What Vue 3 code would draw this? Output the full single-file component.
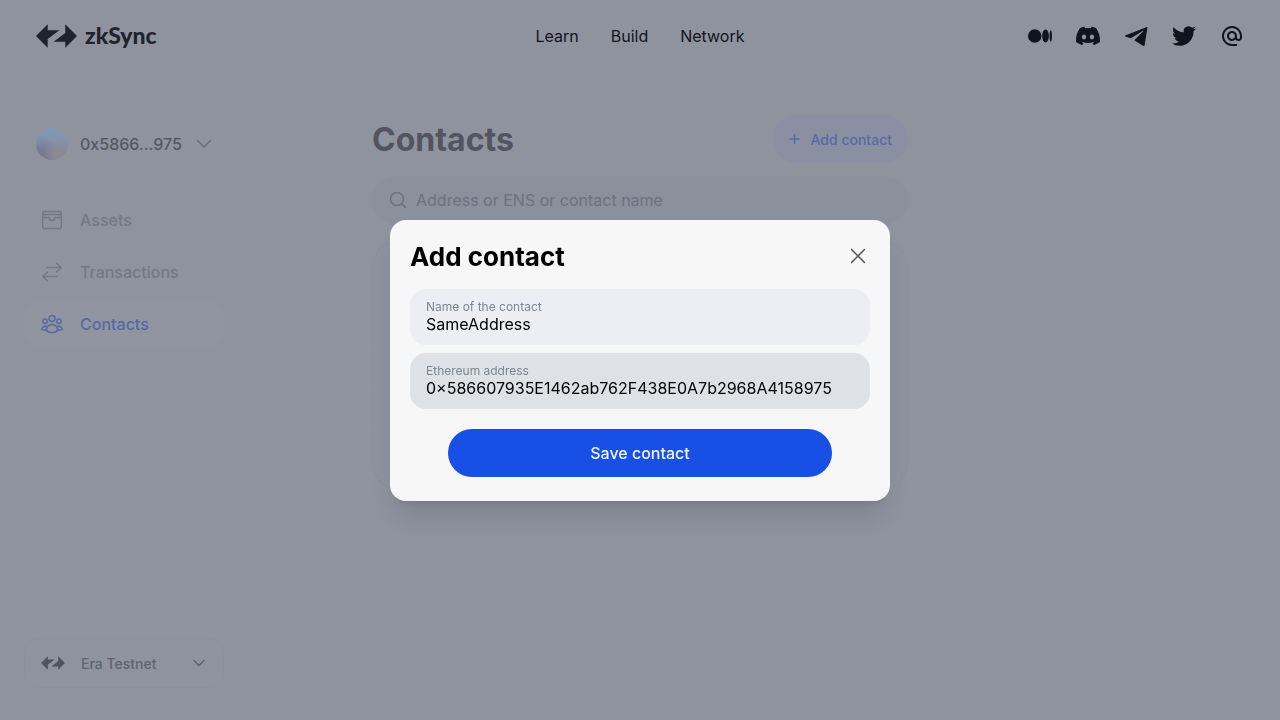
<script setup>
import { ref } from 'vue'

const topLinks = ['Learn', 'Build', 'Network']
const socials = [
  { name: 'Medium', d: 'M13.54 12a6.8 6.8 0 01-6.77 6.82A6.8 6.8 0 010 12a6.8 6.8 0 016.77-6.82A6.8 6.8 0 0113.54 12zM20.96 12c0 3.54-1.51 6.42-3.38 6.42-1.87 0-3.39-2.88-3.39-6.42s1.52-6.42 3.39-6.42 3.38 2.88 3.38 6.42M24 12c0 3.17-.53 5.75-1.19 5.75-.66 0-1.19-2.58-1.19-5.75s.53-5.75 1.19-5.75C23.47 6.25 24 8.83 24 12z' },
  { name: 'Discord', d: 'M20.317 4.3698a19.7913 19.7913 0 00-4.8851-1.5152.0741.0741 0 00-.0785.0371c-.211.3753-.4447.8648-.6083 1.2495-1.8447-.2762-3.68-.2762-5.4868 0-.1636-.3933-.4058-.8742-.6177-1.2495a.077.077 0 00-.0785-.037 19.7363 19.7363 0 00-4.8852 1.515.0699.0699 0 00-.0321.0277C.5334 9.0458-.319 13.5799.0992 18.0578a.0824.0824 0 00.0312.0561c2.0528 1.5076 4.0413 2.4228 5.9929 3.0294a.0777.0777 0 00.0842-.0276c.4616-.6304.8731-1.2952 1.226-1.9942a.076.076 0 00-.0416-.1057c-.6528-.2476-1.2743-.5495-1.8722-.8923a.077.077 0 01-.0076-.1277c.1258-.0943.2517-.1923.3718-.2914a.0743.0743 0 01.0776-.0105c3.9278 1.7933 8.18 1.7933 12.0614 0a.0739.0739 0 01.0785.0095c.1202.099.246.1981.3728.2924a.077.077 0 01-.0066.1276 12.2986 12.2986 0 01-1.873.8914.0766.0766 0 00-.0407.1067c.3604.698.7719 1.3628 1.225 1.9932a.076.076 0 00.0842.0286c1.961-.6067 3.9495-1.5219 6.0023-3.0294a.077.077 0 00.0313-.0552c.5004-5.177-.8382-9.6739-3.5485-13.6604a.061.061 0 00-.0312-.0286zM8.02 15.3312c-1.1825 0-2.1569-1.0857-2.1569-2.419 0-1.3332.9555-2.4189 2.157-2.4189 1.2108 0 2.1757 1.0952 2.1568 2.419 0 1.3332-.9555 2.4189-2.1569 2.4189zm7.9748 0c-1.1825 0-2.1569-1.0857-2.1569-2.419 0-1.3332.9554-2.4189 2.1569-2.4189 1.2108 0 2.1757 1.0952 2.1568 2.419 0 1.3332-.946 2.4189-2.1568 2.4189Z' },
  { name: 'Telegram', d: 'M22.9 3 1.8 11.3c-1 .4-1 1.2-.1 1.5l5.2 1.4L18.6 7c.6-.4 1.1-.1.7.3l-9.1 8.9 0 0 8.8 5.6c.8.5 1.5.2 1.7-.8L23.4 4c.1-.8-.1-1.200-.5-1z' },
  { name: 'Twitter', d: 'M23.953 4.57a10 10 0 01-2.825.775 4.958 4.958 0 002.163-2.723c-.951.555-2.005.959-3.127 1.184a4.92 4.92 0 00-8.384 4.482C7.69 8.095 4.067 6.13 1.64 3.162a4.822 4.822 0 00-.666 2.475c0 1.71.87 3.213 2.188 4.096a4.904 4.904 0 01-2.228-.616v.06a4.923 4.923 0 003.946 4.827 4.996 4.996 0 01-2.212.085 4.936 4.936 0 004.604 3.417 9.867 9.867 0 01-6.102 2.105c-.39 0-.779-.023-1.17-.067a13.995 13.995 0 007.557 2.209c9.053 0 13.998-7.496 13.998-13.985 0-.21 0-.42-.015-.63A9.935 9.935 0 0024 4.59z' },
  { name: 'Email', d: 'M12 1.950C6.480 1.950 2 6.430 2 12s4.480 10 10 10h5v-2h-5c-4.340 0-8-3.660-8-8s3.660-8 8-8 8 3.660 8 8v1.430c0 .79-.71 1.570-1.500 1.570s-1.500-.780-1.500-1.570V12c0-2.760-2.240-5-5-5s-5 2.240-5 5 2.240 5 5 5c1.380 0 2.640-.560 3.540-1.470.650.890 1.770 1.470 2.960 1.470 1.970 0 3.500-1.600 3.500-3.570V12c0-5.520-4.480-10.050-10-10.050zM12 15c-1.660 0-3-1.340-3-3s1.340-3 3-3 3 1.340 3 3-1.340 3-3 3z' },
]
const menu = [
  { label: 'Assets', icon: 'assets' },
  { label: 'Transactions', icon: 'swap' },
  { label: 'Contacts', icon: 'people', active: true },
]
const search = ref('')
const name = ref('SameAddress')
const address = ref('0×586607935E1462ab762F438E0A7b2968A4158975')
</script>

<template>
  <div class="page">
    <header class="header">
      <a href="#" class="brand" aria-label="zkSync">
        <svg width="41" height="24" viewBox="0 0 42 24" aria-hidden="true">
          <path d="M0 12 12 0v6h12L12 15v9zM42 12 30 0v9L18 18h12v6z" />
        </svg>
        <span>zkSync</span>
      </a>
      <nav class="top-nav">
        <a v-for="l in topLinks" :key="l" href="#">{{ l }}</a>
      </nav>
      <div class="socials">
        <a v-for="s in socials" :key="s.name" href="#" :aria-label="s.name">
          <svg width="24" height="24" viewBox="0 0 24 24"><path :d="s.d" /></svg>
        </a>
      </div>
    </header>

    <div class="body">
      <aside class="sidebar">
        <button class="account" type="button">
          <span class="avatar"></span>
          <span class="account-name">0x5866...975</span>
          <svg width="16" height="16" viewBox="0 0 16 16" class="line"><path d="M1.500 4.500 8 11l6.500-6.500" /></svg>
        </button>
        <nav class="menu">
          <a v-for="m in menu" :key="m.label" href="#" :class="{ active: m.active }">
            <svg width="24" height="24" viewBox="0 0 24 24" class="line">
              <template v-if="m.icon === 'assets'">
                <rect x="2.750" y="3.500" width="18.500" height="17" rx="2" />
                <path d="M3 6.500h18M3 9.500h5.500c.5 0 .7.300.8.800a2.750 2.750 0 0 0 5.400 0c.1-.5.3-.8.8-.8H21" />
              </template>
              <path v-else-if="m.icon === 'swap'" d="M7 7.500h14M16.500 3l4.500 4.500-4.500 4.500M17 16.500H3M7.500 12 3 16.500 7.500 21" />
              <template v-else>
                <circle cx="12" cy="6.500" r="3" />
                <circle cx="5" cy="9.300" r="2.200" />
                <circle cx="19" cy="9.300" r="2.200" />
                <path d="M12 12.500c-3 0-5.500 2.200-5.500 4.800 0 2 2.500 3.200 5.500 3.200s5.500-1.200 5.500-3.200c0-2.600-2.500-4.800-5.500-4.800zM6.200 14.300c-2.400-.4-4.400 1-4.400 3.400 1.500.8 3.200.8 4.900.4M17.800 14.300c2.400-.4 4.400 1 4.400 3.400-1.500.8-3.200.8-4.900.4" />
              </template>
            </svg>
            <span>{{ m.label }}</span>
          </a>
        </nav>
        <div class="network">
          <svg class="network-logo" width="24" height="14" viewBox="0 0 42 24" aria-hidden="true">
            <path d="M0 12 12 0v6h12L12 15v9zM42 12 30 0v9L18 18h12v6z" />
          </svg>
          <select aria-label="Network">
            <option>Era Testnet</option>
          </select>
          <svg width="16" height="16" viewBox="0 0 16 16" class="line network-arrow"><path d="m3 5.500 5 5 5-5" /></svg>
        </div>
      </aside>

      <main class="content">
        <div class="title-row">
          <h1>Contacts</h1>
          <button class="add" type="button">
            <svg width="12" height="12" viewBox="0 0 12 12" class="line"><path d="M5.500 1.500v9M1 6h9" /></svg>
            <span>Add contact</span>
          </button>
        </div>
        <label class="search">
          <svg width="20" height="20" viewBox="0 0 20 20" class="line"><circle cx="9" cy="9" r="6.500" /><path d="m13.700 13.700 3.800 3.800" /></svg>
          <input v-model="search" type="text" aria-label="Search contacts" placeholder="Address or ENS or contact name" />
        </label>
        <section class="empty"></section>
      </main>
    </div>

    <div class="overlay">
      <form class="modal" role="dialog" aria-labelledby="modal-title" @submit.prevent>
        <div class="modal-head">
          <h2 id="modal-title">Add contact</h2>
          <button class="close" type="button" aria-label="Close">
            <svg width="24" height="24" viewBox="0 0 24 24" class="line"><path d="m5.500 5.500 13 13M18.500 5.500l-13 13" /></svg>
          </button>
        </div>
        <div class="field">
          <label for="contact-name">Name of the contact</label>
          <input id="contact-name" v-model="name" type="text" />
        </div>
        <div class="field focused">
          <label for="contact-address">Ethereum address</label>
          <input id="contact-address" v-model="address" type="text" spellcheck="false" />
        </div>
        <button class="save" type="submit">Save contact</button>
      </form>
    </div>
  </div>
</template>

<style>
body {
  background: #8f939e;
}
</style>

<style scoped>
* {
  box-sizing: border-box;
}
.page {
  display: flex;
  flex-direction: column;
  min-height: 100vh;
  background: #8f939e;
  font-family: Inter, "Liberation Sans", sans-serif;
  font-size: 16px;
  color: #11141d;
}
a {
  color: inherit;
  text-decoration: none;
}
button,
input,
select {
  border: 0;
  padding: 0;
  margin: 0;
  background: none;
  font: inherit;
  color: inherit;
  outline: none;
}
svg {
  display: block;
  flex: none;
  fill: currentColor;
}
.line {
  fill: none;
  stroke: currentColor;
  stroke-width: 1.5;
  stroke-linecap: round;
  stroke-linejoin: round;
}
.header {
  display: grid;
  grid-template-columns: 1fr auto 1fr;
  align-items: center;
  height: 72px;
  padding: 0 36px;
}
.brand {
  display: flex;
  align-items: center;
  gap: 8px;
  color: #1f232e;
  font-family: Lato, Inter, sans-serif;
  font-size: 23px;
  font-weight: 900;
  line-height: 24px;
}
.brand span {
  padding-bottom: 2px;
}
.top-nav {
  display: flex;
  gap: 32px;
}
.socials {
  display: flex;
  justify-content: flex-end;
  gap: 24px;
}
.body {
  flex: 1;
  display: grid;
  grid-template-columns: 1fr minmax(0, 536px) 1fr;
}
.sidebar {
  display: flex;
  flex-direction: column;
  width: 200px;
  margin-left: 24px;
  padding: 56px 0 32px;
}
.account {
  display: flex;
  align-items: center;
  padding: 0 0 0 12px;
  height: 32px;
  color: #6b6f79;
}
.avatar {
  flex: none;
  width: 32px;
  height: 32px;
  border-radius: 50%;
  background:
    radial-gradient(circle at 68% 78%, #8f8b8f 0, transparent 45%),
    radial-gradient(circle at 15% 85%, #747592 0, transparent 50%),
    linear-gradient(#8499b2, #8292aa 45%, #7e8198);
}
.account-name {
  margin: 0 14px 0 12px;
  font-weight: 500;
  color: #555862;
}
.menu {
  display: flex;
  flex-direction: column;
  gap: 4px;
  margin-top: 36px;
}
.menu a {
  display: flex;
  align-items: center;
  gap: 16px;
  height: 48px;
  padding: 0 16px;
  border-radius: 16px;
  font-weight: 500;
  color: #727985;
}
.menu a.active {
  color: #566aa2;
  background: #91959f;
}
.network {
  display: grid;
  grid-template-columns: auto 1fr auto;
  align-items: center;
  margin-top: auto;
  height: 50px;
  border: 1px solid #8b909c;
  border-radius: 16px;
  padding: 0 16px;
  color: #5e6370;
}
.network-logo {
  color: #50545f;
}
.network select {
  grid-column: 2 / 4;
  grid-row: 1;
  appearance: none;
  height: 48px;
  padding-left: 16px;
  font-size: 14px;
  font-weight: 500;
}
.network-arrow {
  grid-column: 3;
  grid-row: 1;
  pointer-events: none;
}
.content {
  display: flex;
  flex-direction: column;
  padding: 43px 0;
}
.title-row {
  display: flex;
  align-items: center;
  justify-content: space-between;
  height: 48px;
}
h1 {
  margin: 2px 0 0;
  font-size: 32px;
  line-height: 40px;
  font-weight: 700;
  color: #52555f;
}
.add {
  display: flex;
  align-items: center;
  gap: 10px;
  height: 48px;
  padding: 0 16px;
  border-radius: 24px;
  background: #8a90a2;
  color: #566aa2;
  font-size: 14px;
  font-weight: 500;
}
.search {
  display: flex;
  align-items: center;
  gap: 8px;
  height: 48px;
  margin-top: 13px;
  padding: 0 16px;
  border-radius: 24px;
  background: #8a909c;
  color: #6b7280;
}
.search input {
  flex: 1;
  min-width: 0;
}
.search input::placeholder {
  color: #6b7280;
  opacity: 1;
}
.empty {
  margin-top: 16px;
  min-height: 250px;
  border: 1px dashed #888d99;
  border-radius: 28px;
}
.overlay {
  position: fixed;
  inset: 0;
  display: flex;
  align-items: center;
  justify-content: center;
  padding: 16px;
}
.modal {
  width: 100%;
  max-width: 500px;
  padding: 20px 20px 24px;
  border-radius: 16px;
  background: #f7f7f7;
  box-shadow: 0 20px 25px -5px rgba(0, 0, 0, 0.1), 0 8px 10px -6px rgba(0, 0, 0, 0.1);
}
.modal-head {
  display: flex;
  align-items: flex-start;
  justify-content: space-between;
  height: 49px;
}
h2 {
  margin: 0;
  font-size: 26px;
  line-height: 34px;
  font-weight: 700;
  color: #000;
}
.close {
  margin-top: 4px;
  color: #52555f;
}
.field {
  display: flex;
  flex-direction: column;
  height: 56px;
  padding: 10px 16px;
  border-radius: 16px;
  background: #edeef3;
}
.field + .field {
  margin-top: 8px;
}
.field.focused {
  background: #dee2e6;
}
.field label {
  font-size: 12px;
  line-height: 16px;
  color: #7b8794;
}
.field input {
  height: 18px;
  line-height: 18px;
  color: #000;
}
.save {
  display: block;
  width: calc(100% - 76px);
  height: 48px;
  margin: 20px auto 0;
  border-radius: 24px;
  background: #1850e6;
  color: #f0f4ff;
  font-weight: 500;
}
</style>
